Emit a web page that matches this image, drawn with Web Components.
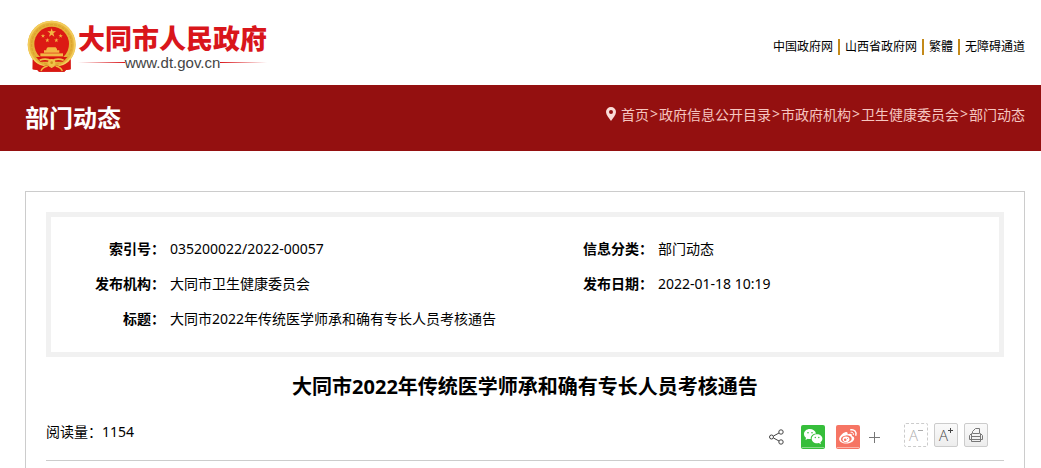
<!DOCTYPE html>
<html lang="zh-CN">
<head>
  <meta charset="UTF-8">
  <meta name="viewport" content="width=device-width, initial-scale=1.0">
  <title>大同市2022年传统医学师承和确有专长人员考核通告</title>
  <style>
    body {
      margin: 0;
      min-height: 100vh;
      display: flex;
      flex-direction: column;
      background: #fff;
      color: #000;
      font-family: "Noto Sans", "Noto Sans CJK SC", sans-serif;
      font-size: 14px;
    }
  </style>
</head>
<body>

  <site-header>
    <site-logo slot="logo" url="www.dt.gov.cn">大同市人民政府</site-logo>
    <a href="#gov">中国政府网</a>
    <a href="#shanxi">山西省政府网</a>
    <a href="#hant">繁體</a>
    <a href="#access">无障碍通道</a>
  </site-header>

  <page-banner>
    <span slot="title">部门动态</span>
    <a href="#home">首页</a>
    <a href="#catalog">政府信息公开目录</a>
    <a href="#org">市政府机构</a>
    <a href="#health">卫生健康委员会</a>
    <a href="#news">部门动态</a>
  </page-banner>

  <article-card>
    <info-table>
      <info-item label="索引号：">035200022/2022-00057</info-item>
      <info-item label="信息分类：">部门动态</info-item>
      <info-item label="发布机构：">大同市卫生健康委员会</info-item>
      <info-item label="发布日期：">2022-01-18 10:19</info-item>
      <info-item label="标题：" wide>大同市2022年传统医学师承和确有专长人员考核通告</info-item>
    </info-table>
    <span slot="title">大同市2022年传统医学师承和确有专长人员考核通告</span>
    <span slot="views">阅读量：1154</span>
    <share-bar slot="tools"></share-bar>
    <font-tools slot="tools"></font-tools>
  </article-card>

  <!-- 页头 -->
  <template id="site-header-template">
    <style>
      :host {
        display: flex;
        justify-content: space-between;
        align-items: flex-start;
        box-sizing: border-box;
        height: 85px;
        padding: 20px 16px 0 27px;
      }
      nav {
        display: flex;
        align-items: center;
        gap: 5px;
        padding-top: 18px;
        font-size: 12px;
        line-height: 18px;
      }
      ::slotted(a) {
        color: #000;
        text-decoration: none;
        white-space: nowrap;
      }
      ::slotted(a:not(:last-child)) {
        padding-right: 5px;
        border-right: 2px solid #c48a1a;
        line-height: 16px;
      }
    </style>
    <slot name="logo"></slot>
    <nav aria-label="站点链接"><slot></slot></nav>
  </template>

  <!-- 国徽与站名 -->
  <template id="site-logo-template">
    <style>
      :host {
        display: flex;
        gap: 1px;
      }
      svg {
        display: block;
        flex: none;
      }
      .text {
        padding-top: 5px;
      }
      .name {
        color: #d9161b;
        font-family: "Liberation Sans", "Noto Sans CJK SC", sans-serif;
        font-size: 27px;
        font-weight: 900;
        line-height: 30px;
        white-space: nowrap;
      }
      .url {
        display: flex;
        align-items: center;
        color: #444;
        font-family: "Liberation Sans", sans-serif;
        font-size: 15px;
        line-height: 15px;
      }
      .url::before,
      .url::after {
        content: "";
        flex: 1;
        height: 1px;
        background: linear-gradient(to right, #fff, #d9161b);
      }
      .url::after {
        background: linear-gradient(to left, #fff, #d9161b);
      }
    </style>
    <svg width="50" height="52" viewBox="36 30 150 156" aria-hidden="true">
      <path fill="#d01a14" d="M54 136l-1 42 14 2 5 5h76l5-5 14-2-1-42z"/>
      <circle cx="110" cy="104" r="72" fill="#e6b23a"/>
      <circle cx="110" cy="104" r="69" fill="none" stroke="#f3cd5c" stroke-width="5"/>
      <circle cx="110" cy="104" r="60" fill="none" stroke="#dba52e" stroke-width="4" stroke-dasharray="9 3"/>
      <circle cx="110" cy="102" r="52" fill="#dc1a14"/>
      <g fill="#f3b743">
        <path d="M110 55l3 9h10l-8 6 3 10-8-6-8 6 3-10-8-6h10z"/>
        <path id="star" d="M84 71l1.500 4.500h5l-4 3 1.500 5-4-3-4 3 1.500-5-4-3h5z"/>
        <use href="#star" x="13" y="13"/>
        <use href="#star" x="40" y="13"/>
        <use href="#star" x="53"/>
        <path d="M94 117l4-5h24l4 5v4h7v7H87v-7h7z"/>
        <path d="M76 130h68v9H76z"/>
      </g>
      <path fill="#d8150f" d="M63 141h94l-13 14H76z"/>
      <path fill="none" stroke="#f0c24a" stroke-width="5" d="M74 151q20-9 36 3 16-12 36-3"/>
      <path fill="#d91812" d="M53 148q10 16 33 20l10-2 14 8 14-8 10 2q23-4 33-20v30l-14 2-5 5H72l-5-5-14-2z"/>
      <circle cx="110" cy="158" r="11" fill="#f0c348"/>
      <circle cx="110" cy="158" r="4" fill="#d3941d"/>
      <path fill="none" stroke="#efbd3c" stroke-width="4" d="M78 183q4-11 20-15m44 15q-4-11-20-15"/>
    </svg>
    <div class="text">
      <div class="name"><slot></slot></div>
      <div class="url"><span></span></div>
    </div>
  </template>

  <!-- 栏目横幅 -->
  <template id="page-banner-template">
    <style>
      :host {
        display: flex;
        justify-content: space-between;
        box-sizing: border-box;
        height: 66px;
        padding: 0 16px 0 25px;
        background: #941010;
        color: #fff;
      }
      h2 {
        margin: 0;
        font-size: 24px;
        line-height: 66px;
        white-space: nowrap;
      }
      nav {
        display: flex;
        align-items: center;
        height: 58px;
        color: #f6c6c0;
        white-space: nowrap;
      }
      svg {
        margin-right: 5px;
      }
      ::slotted(a) {
        color: inherit;
        text-decoration: none;
      }
      .crumbs {
        display: flex;
      }
      .sep {
        margin: 0 1px;
      }
    </style>
    <h2><slot name="title"></slot></h2>
    <nav aria-label="当前位置">
      <svg width="10" height="14" viewBox="0 0 10 14" aria-hidden="true">
        <path fill="#fbdcd8" fill-rule="evenodd" d="M5 0a5 5 0 0 1 5 5c0 3-3 6-5 9C3 11 0 8 0 5a5 5 0 0 1 5-5zm0 3a2 2 0 1 0 0 4 2 2 0 0 0 0-4z"/>
      </svg>
      <div class="crumbs"></div>
    </nav>
  </template>

  <!-- 正文卡片 -->
  <template id="article-card-template">
    <style>
      :host {
        display: block;
        flex: 1;
        margin: 40px 16px 0 25px;
        padding: 20px 20px 0;
        border: 1px solid #ccc;
        border-bottom: 0;
      }
      h1 {
        margin: 0;
        font-size: 20px;
        line-height: 60px;
        text-align: center;
      }
      .meta {
        display: flex;
        align-items: flex-start;
        min-height: 43px;
        padding-right: 16px;
        border-bottom: 1px solid #ccc;
      }
      .views {
        flex: 1;
        line-height: 30px;
      }
    </style>
    <slot></slot>
    <h1><slot name="title"></slot></h1>
    <div class="meta">
      <div class="views"><slot name="views"></slot></div>
      <slot name="tools"></slot>
    </div>
  </template>

  <!-- 信息表 -->
  <template id="info-table-template">
    <style>
      :host {
        display: grid;
        grid-template-columns: 488fr 460fr;
        padding: 14px 0 16px;
        border: 5px solid #f1f1f1;
      }
      ::slotted([wide]) {
        grid-column: 1 / -1;
      }
    </style>
    <slot></slot>
  </template>

  <template id="info-item-template">
    <style>
      :host {
        display: flex;
        gap: 5px;
        line-height: 35px;
      }
      b {
        flex: none;
        width: 114px;
        text-align: right;
      }
    </style>
    <b></b>
    <span><slot></slot></span>
  </template>

  <!-- 分享 -->
  <template id="share-bar-template">
    <style>
      :host {
        display: flex;
        align-items: center;
        padding: 8px 24px 0 0;
      }
      button {
        display: block;
        padding: 0;
        border: 0;
        background: none;
        cursor: pointer;
      }
      svg {
        display: block;
      }
      .share {
        margin-right: 17px;
      }
      .weibo {
        margin: 0 9px 0 11px;
      }
    </style>
    <button class="share" aria-label="分享">
      <svg width="15" height="16" viewBox="0 0 15 16" fill="none" stroke="#444">
        <path d="M4.500 7l5.500-3M4.500 9l5.500 3"/>
        <circle cx="2.500" cy="8" r="2"/>
        <circle cx="12" cy="3" r="2.200"/>
        <circle cx="12" cy="13" r="2.200"/>
      </svg>
    </button>
    <button aria-label="微信">
      <svg width="24" height="24" viewBox="0 0 24 24">
        <rect width="24" height="24" rx="2" fill="#36be3b"/>
        <path stroke="#8bd98c" d="M1 22.500h22"/>
        <path fill="#fff" d="M8.800 4C5.500 4 3 6.200 3 9c0 1.600.8 2.900 2 3.800L4.500 15l2.300-1.200c.7.200 1.300.3 2 .2h1C9.300 11 12 8.500 15 8.400 14.300 5.800 11.800 4 8.800 4z"/>
        <path fill="#fff" d="M16 9.300c-3 0-5.300 2-5.300 4.500s2.300 4.500 5.300 4.500c.7 0 1.200-.1 1.800-.3l2.200 1.200-.6-1.900c1.200-.8 2-2 2-3.500 0-2.500-2.400-4.500-5.400-4.500z"/>
        <g fill="#36be3b">
          <circle cx="7" cy="7.700" r="0.800"/><circle cx="11" cy="7.700" r="0.800"/>
          <circle cx="14.300" cy="12.500" r="0.700"/><circle cx="17.800" cy="12.500" r="0.700"/>
        </g>
      </svg>
    </button>
    <button class="weibo" aria-label="微博">
      <svg width="24" height="24" viewBox="0 0 24 24">
        <rect width="24" height="24" rx="2" fill="#f67564"/>
        <path stroke="#fbb5ab" d="M1 22.500h22"/>
        <path fill="#fff" d="M9.800 7c1.500-.4 2.200.6 1.700 2.300 2.400-1 5-.8 4.400 1.700 2 .6 2.600 1.700 2.300 3-.6 2.700-4 4.600-8 4.600-4 0-7-1.900-7-4.600C3.200 11.500 6.500 7.900 9.800 7z"/>
        <ellipse cx="10.300" cy="14" rx="5.400" ry="3.600" fill="#f67564" transform="rotate(-6 10 14)"/>
        <ellipse cx="10" cy="14.200" rx="3.400" ry="2.800" fill="#fff"/>
        <circle cx="9.200" cy="14.700" r="1.300" fill="#f67564"/>
        <circle cx="11.500" cy="13.400" r="0.500" fill="#f67564"/>
        <g fill="none" stroke="#fff" stroke-linecap="round">
          <path stroke-width="1.400" d="M14.800 4.800c3.500-.7 6 2 5 5.400"/>
          <path d="M15 7.200c1.600-.3 2.800.9 2.400 2.400"/>
        </g>
      </svg>
    </button>
    <button aria-label="更多">
      <svg width="11" height="11" viewBox="0 0 11 11" stroke="#777">
        <path d="M5.500 0v11M0 5.500h11"/>
      </svg>
    </button>
  </template>

  <!-- 字号与打印 -->
  <template id="font-tools-template">
    <style>
      :host {
        display: flex;
        gap: 6px;
        padding-top: 6px;
      }
      button {
        display: flex;
        align-items: center;
        justify-content: center;
        box-sizing: border-box;
        width: 24px;
        height: 24px;
        padding: 0;
        border: 1px solid #ccc;
        border-radius: 2px;
        background: linear-gradient(#fafafa, #ededed);
        color: #444;
        font-family: "Open Sans", sans-serif;
        font-size: 15px;
        font-weight: 300;
        line-height: 22px;
        cursor: pointer;
      }
      .smaller {
        border-style: dashed;
        background: #fff;
        color: #aaa;
      }
      .sign {
        align-self: flex-start;
        margin-top: 4px;
      }
    </style>
    <button class="smaller" aria-label="缩小字号">A<svg class="sign" width="5" height="5" viewBox="0 0 5 5" stroke="currentColor"><path d="M0 2.500h5"/></svg></button>
    <button aria-label="放大字号">A<svg class="sign" width="5" height="5" viewBox="0 0 5 5" stroke="currentColor"><path d="M0 2.500h5M2.500 0v5"/></svg></button>
    <button aria-label="打印">
      <svg width="14" height="14" viewBox="0 0 14 14" fill="none" stroke="#777">
        <path d="M3.500 5.500v-2l3-3h4v5M3.500 5.500h7M2.500 5.500l-2 2v4h2M11.500 5.500l2 2v4h-2M2.500 5.500v8h9v-8M2.500 8.500h9M2.500 11.500h9"/>
      </svg>
    </button>
  </template>

  <script>
    (function () {
      // 公共基类：克隆同名模板到 shadow root
      class BaseElement extends HTMLElement {
        constructor () {
          super()
          const template = document.getElementById(this.localName + '-template')
          this.attachShadow({ mode: 'open' }).appendChild(template.content.cloneNode(true))
        }
      }

      class SiteHeader extends BaseElement {}

      class SiteLogo extends BaseElement {
        connectedCallback () {
          this.shadowRoot.querySelector('.url span').textContent = this.getAttribute('url')
        }
      }

      // 面包屑：每个链接放入独立插槽，中间加分隔符
      class PageBanner extends BaseElement {
        connectedCallback () {
          const crumbs = this.shadowRoot.querySelector('.crumbs')
          crumbs.innerHTML = ''
          this.querySelectorAll('a').forEach((link, i) => {
            if (i > 0) {
              const sep = document.createElement('span')
              sep.className = 'sep'
              sep.textContent = '>'
              crumbs.appendChild(sep)
            }
            const slot = document.createElement('slot')
            slot.name = link.slot = 'crumb-' + i
            crumbs.appendChild(slot)
          })
        }
      }

      class ArticleCard extends BaseElement {}
      class InfoTable extends BaseElement {}

      class InfoItem extends BaseElement {
        connectedCallback () {
          this.shadowRoot.querySelector('b').textContent = this.getAttribute('label')
        }
      }

      class ShareBar extends BaseElement {}
      class FontTools extends BaseElement {}

      // 注册组件
      customElements.define('site-header', SiteHeader)
      customElements.define('site-logo', SiteLogo)
      customElements.define('page-banner', PageBanner)
      customElements.define('article-card', ArticleCard)
      customElements.define('info-table', InfoTable)
      customElements.define('info-item', InfoItem)
      customElements.define('share-bar', ShareBar)
      customElements.define('font-tools', FontTools)
    })()
  </script>
</body>
</html>
